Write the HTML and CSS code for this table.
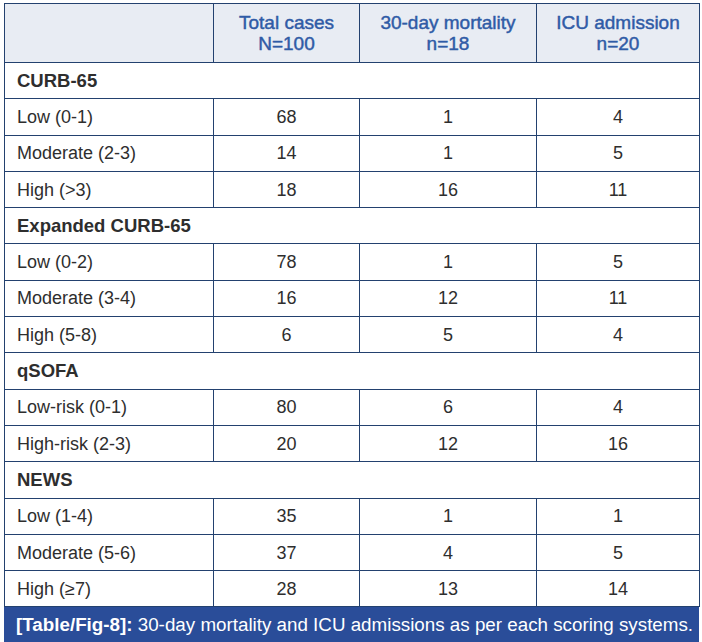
FILE: index.html
```html
<!DOCTYPE html>
<html>
<head>
<meta charset="utf-8">
<link rel="stylesheet" href="styles.css">
</head>
<body>
<div class="figure">
<table class="data">
<colgroup><col class="c1"><col class="c2"><col class="c3"><col class="c4"></colgroup>
<thead>
<tr class="head"><th></th><th>Total cases<br>N=100</th><th>30-day mortality<br>n=18</th><th>ICU admission<br>n=20</th></tr>
</thead>
<tbody>
<tr class="group"><td colspan="4">CURB-65</td></tr>
<tr><td>Low (0-1)</td><td>68</td><td>1</td><td>4</td></tr>
<tr><td>Moderate (2-3)</td><td>14</td><td>1</td><td>5</td></tr>
<tr><td>High (&gt;3)</td><td>18</td><td>16</td><td>11</td></tr>
<tr class="group"><td colspan="4">Expanded CURB-65</td></tr>
<tr><td>Low (0-2)</td><td>78</td><td>1</td><td>5</td></tr>
<tr><td>Moderate (3-4)</td><td>16</td><td>12</td><td>11</td></tr>
<tr><td>High (5-8)</td><td>6</td><td>5</td><td>4</td></tr>
<tr class="group"><td colspan="4">qSOFA</td></tr>
<tr><td>Low-risk (0-1)</td><td>80</td><td>6</td><td>4</td></tr>
<tr><td>High-risk (2-3)</td><td>20</td><td>12</td><td>16</td></tr>
<tr class="group"><td colspan="4">NEWS</td></tr>
<tr><td>Low (1-4)</td><td>35</td><td>1</td><td>1</td></tr>
<tr><td>Moderate (5-6)</td><td>37</td><td>4</td><td>5</td></tr>
<tr><td>High (≥7)</td><td>28</td><td>13</td><td>14</td></tr>
</tbody>
</table>
<div class="caption"><b>[Table/Fig-8]:</b> 30-day mortality and ICU admissions as per each scoring systems.</div>
</div>
</body>
</html>
```
FILE: styles.css
```css
html, body {
  margin: 0;
  background: #ffffff;
}
body {
  padding: 3px 0 0 4px;
  font-family: "Liberation Sans", Arial, sans-serif;
}
.figure {
  width: 695px;
}
.data {
  width: 695px;
  border-collapse: collapse;
  table-layout: fixed;
  color: #2e2e2e;
  font-size: 18px;
}
.c1 { width: 209px; }
.c2 { width: 146px; }
.c3 { width: 177px; }
.c4 { width: 163px; }
.data th,
.data td {
  border: 1px solid #23416f;
  padding: 0;
}
.head th {
  height: 58px;
  background: #e8ecf3;
  color: #2f5ba6;
  font-weight: normal;
  -webkit-text-stroke: 0.45px #2f5ba6;
  font-size: 19px;
  line-height: 21px;
  text-align: center;
  vertical-align: middle;
}
.data td {
  height: 35.3px;
  text-align: center;
  vertical-align: middle;
  line-height: 20px;
}
.data td:first-child {
  text-align: left;
  padding-left: 12px;
}
.group td {
  font-weight: bold;
  font-size: 18.5px;
}
.caption {
  background: #2a4d99;
  color: #ffffff;
  font-size: 18.8px;
  height: 35px;
  line-height: 35px;
  padding-left: 12px;
  white-space: nowrap;
}
.caption b {
  font-weight: bold;
}
```
